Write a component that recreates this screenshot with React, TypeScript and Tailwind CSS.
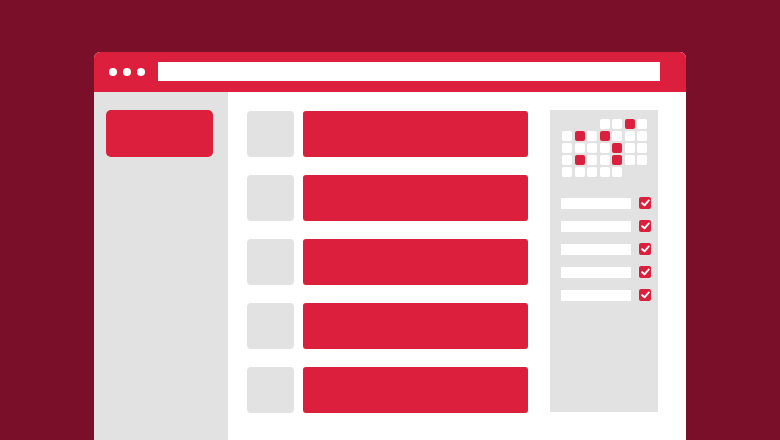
const RED = "bg-[#dc1f3c]";

// 0 = empty, 1 = white cell, 2 = red cell
const calendar = [
  [0, 0, 0, 1, 1, 2, 1],
  [1, 2, 1, 2, 1, 1, 1],
  [1, 1, 1, 1, 2, 1, 1],
  [1, 2, 1, 1, 2, 1, 1],
  [1, 1, 1, 1, 1, 0, 0],
];

function Check() {
  return (
    <div className={`flex h-[12px] w-[12px] items-center justify-center rounded-[2px] ${RED}`}>
      <svg width="9" height="8" viewBox="0 0 9 8" fill="none">
        <path d="M1.2 4.2 L3.5 6.3 L7.8 1.4" stroke="#fff" strokeWidth="1.9" strokeLinecap="round" strokeLinejoin="round" />
      </svg>
    </div>
  );
}

export default function App() {
  return (
    <div className="h-[440px] w-[780px] overflow-hidden bg-[#790f28] px-[94px] pt-[52px]">
      <div className="flex h-[400px] w-[592px] flex-col overflow-hidden rounded-t-[6px] bg-white">
        {/* browser bar */}
        <div className={`flex h-[40px] shrink-0 items-center pl-[15px] pr-[26px] ${RED}`}>
          <div className="flex gap-[6px]">
            <span className="h-[8px] w-[8px] rounded-full bg-white" />
            <span className="h-[8px] w-[8px] rounded-full bg-white" />
            <span className="h-[8px] w-[8px] rounded-full bg-white" />
          </div>
          <div className="ml-[13px] mb-[1px] h-[19px] flex-1 bg-white" />
        </div>

        <div className="flex flex-1">
          {/* sidebar */}
          <div className="w-[134px] shrink-0 bg-[#e1e2e1] pl-[12px] pt-[18px]">
            <div className={`h-[47px] w-[107px] rounded-[5px] ${RED}`} />
          </div>

          {/* main */}
          <div className="flex items-start gap-[22px] pl-[19px] pt-[18px]">
            <div className="flex flex-col gap-[18px] pt-[1px]">
              {[0, 1, 2, 3, 4].map((i) => (
                <div key={i} className="flex gap-[9px]">
                  <div className="h-[46px] w-[47px] rounded-[4px] bg-[#e1e2e1]" />
                  <div className={`h-[46px] w-[225px] rounded-[3px] ${RED}`} />
                </div>
              ))}
            </div>

            {/* right panel */}
            <div className="h-[302px] w-[108px] bg-[#e1e2e1] pl-[12px] pt-[9px]">
              <div className="grid w-[85px] grid-cols-7 gap-x-[2.5px] gap-y-[2px]">
                {calendar.flat().map((c, i) => (
                  <div
                    key={i}
                    className={`h-[10px] w-[10px] rounded-[2px] ${
                      c === 0 ? "" : c === 2 ? RED : "bg-white"
                    }`}
                  />
                ))}
              </div>

              <div className="mt-[20px] flex flex-col gap-[11px]">
                {[0, 1, 2, 3, 4].map((i) => (
                  <div key={i} className="-ml-[1px] flex items-center gap-[8px]">
                    <div className="h-[11px] w-[70px] bg-white" />
                    <Check />
                  </div>
                ))}
              </div>
            </div>
          </div>
        </div>
      </div>
    </div>
  );
}
